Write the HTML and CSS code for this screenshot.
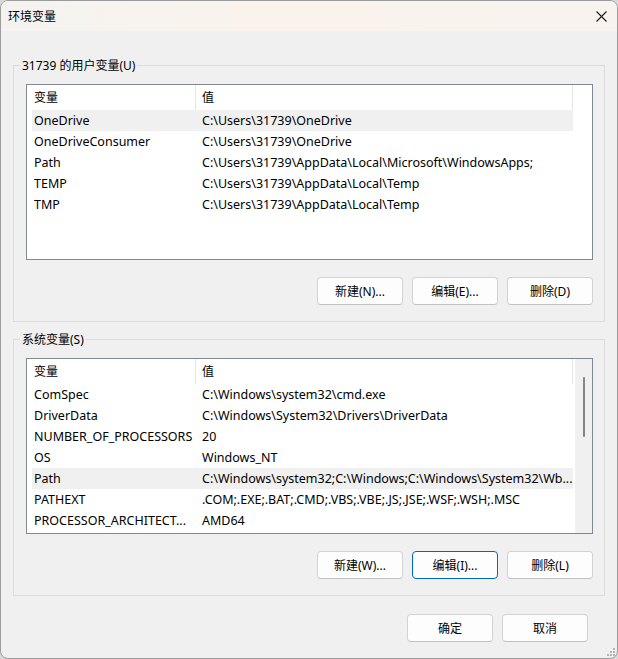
FILE: index.html
```html
<!DOCTYPE html>
<html lang="zh-CN">

<head>
    <meta charset="UTF-8">
    <meta name="viewport" content="width=device-width, initial-scale=1.0">
    <title>环境变量</title>
    <link rel="stylesheet" href="styles.css">
</head>

<body>
    <div class="window">
        <div class="titlebar">
            <span class="title">环境变量</span>
            <button class="btn-close" aria-label="关闭">
                <svg width="11" height="11" viewBox="0 0 11 11">
                    <path d="M0.5 0.5L10.5 10.5M10.5 0.5L0.5 10.5" stroke="#1b1b1b" stroke-width="1.1" fill="none" />
                </svg>
            </button>
        </div>

        <div class="content">
            <div class="group">
                <div class="group-title">31739 的用户变量(U)</div>
                <div class="list">
                    <div class="list-body">
                        <div class="row head">
                            <div class="cell name">变量</div>
                            <div class="cell value">值</div>
                        </div>
                        <div class="row hot">
                            <div class="cell name">OneDrive</div>
                            <div class="cell value">C:\Users\31739\OneDrive</div>
                        </div>
                        <div class="row">
                            <div class="cell name">OneDriveConsumer</div>
                            <div class="cell value">C:\Users\31739\OneDrive</div>
                        </div>
                        <div class="row">
                            <div class="cell name">Path</div>
                            <div class="cell value">C:\Users\31739\AppData\Local\Microsoft\WindowsApps;</div>
                        </div>
                        <div class="row">
                            <div class="cell name">TEMP</div>
                            <div class="cell value">C:\Users\31739\AppData\Local\Temp</div>
                        </div>
                        <div class="row">
                            <div class="cell name">TMP</div>
                            <div class="cell value">C:\Users\31739\AppData\Local\Temp</div>
                        </div>
                    </div>
                    <div class="scroll-space"></div>
                </div>
                <div class="actions">
                    <button class="btn">新建(N)...</button>
                    <button class="btn">编辑(E)...</button>
                    <button class="btn">删除(D)</button>
                </div>
            </div>

            <div class="group group-system">
                <div class="group-title">系统变量(S)</div>
                <div class="list">
                    <div class="list-body">
                        <div class="row head">
                            <div class="cell name">变量</div>
                            <div class="cell value">值</div>
                        </div>
                        <div class="row">
                            <div class="cell name">ComSpec</div>
                            <div class="cell value">C:\Windows\system32\cmd.exe</div>
                        </div>
                        <div class="row">
                            <div class="cell name">DriverData</div>
                            <div class="cell value">C:\Windows\System32\Drivers\DriverData</div>
                        </div>
                        <div class="row">
                            <div class="cell name">NUMBER_OF_PROCESSORS</div>
                            <div class="cell value">20</div>
                        </div>
                        <div class="row">
                            <div class="cell name">OS</div>
                            <div class="cell value">Windows_NT</div>
                        </div>
                        <div class="row hot">
                            <div class="cell name">Path</div>
                            <div class="cell value">C:\Windows\system32;C:\Windows;C:\Windows\System32\Wb...</div>
                        </div>
                        <div class="row">
                            <div class="cell name">PATHEXT</div>
                            <div class="cell value">.COM;.EXE;.BAT;.CMD;.VBS;.VBE;.JS;.JSE;.WSF;.WSH;.MSC</div>
                        </div>
                        <div class="row">
                            <div class="cell name">PROCESSOR_ARCHITECT...</div>
                            <div class="cell value">AMD64</div>
                        </div>
                    </div>
                    <div class="scrollbar">
                        <div class="thumb"></div>
                    </div>
                </div>
                <div class="actions">
                    <button class="btn">新建(W)...</button>
                    <button class="btn btn-default">编辑(I)...</button>
                    <button class="btn">删除(L)</button>
                </div>
            </div>

            <div class="footer">
                <button class="btn">确定</button>
                <button class="btn">取消</button>
            </div>
        </div>

        <div class="grip">
            <svg width="10" height="10" viewBox="0 0 10 10">
                <rect x="7" y="1" width="2" height="2" fill="#b4b4b4" />
                <rect x="4" y="4" width="2" height="2" fill="#b4b4b4" />
                <rect x="7" y="4" width="2" height="2" fill="#b4b4b4" />
                <rect x="1" y="7" width="2" height="2" fill="#b4b4b4" />
                <rect x="4" y="7" width="2" height="2" fill="#b4b4b4" />
                <rect x="7" y="7" width="2" height="2" fill="#b4b4b4" />
            </svg>
        </div>
    </div>
</body>

</html>
```

FILE: styles.css
```css
body {
    font-family: "Noto Sans", "Noto Sans CJK SC", sans-serif;
    font-size: 12px;
    color: #000;
    margin: 0;
    padding: 0;
    background-color: #d9d9d9;
}

.window {
    position: relative;
    width: 618px;
    height: 659px;
    box-sizing: border-box;
    border: 1px solid #9c9c9c;
    border-radius: 8px;
    background-color: #f0f0f0;
    overflow: hidden;
}

.titlebar {
    display: flex;
    align-items: center;
    justify-content: space-between;
    height: 30px;
    padding: 0 0 0 7px;
    background: linear-gradient(90deg, #f4f3f1 0%, #faf3ec 45%, #f8f3ef 100%);
}

.title {
    font-size: 12px;
    line-height: 16px;
    padding-top: 1px;
}

.btn-close {
    display: flex;
    align-items: center;
    justify-content: center;
    width: 30px;
    height: 30px;
    margin-right: 1px;
    padding: 0;
    border: none;
    background: transparent;
}

.content {
    padding: 34px 12px 0 12px;
}

.group {
    border: 1px solid #dcdcdc;
    padding: 0 11px 16px 12px;
}

.group-system {
    margin-top: 17px;
}

.group-title {
    width: fit-content;
    height: 16px;
    line-height: 16px;
    margin: -8px 0 0 -6px;
    padding: 0 2px;
    background-color: #f0f0f0;
}

.list {
    display: flex;
    height: 176px;
    box-sizing: border-box;
    margin-top: 10px;
    border: 1px solid #828790;
    background-color: #fff;
}

.list-body {
    width: 541px;
    padding-left: 5px;
    overflow: hidden;
}

.row {
    display: flex;
    height: 21px;
    line-height: 21px;
    font-size: 12.5px;
    white-space: nowrap;
}

.row.head {
    height: 25px;
    line-height: 25px;
    font-size: 12px;
    border-right: 1px solid #e5e5e5;
    box-sizing: border-box;
}

.row.hot {
    background-color: #f0f0f0;
}

.cell {
    overflow: hidden;
}

.cell.name {
    width: 164px;
    padding-left: 2px;
    box-sizing: border-box;
    flex-shrink: 0;
}

.row.head .cell.name {
    border-right: 1px solid #e5e5e5;
}

.cell.value {
    flex: 1;
    padding-left: 6px;
}

.scroll-space {
    width: 19px;
}

.scrollbar {
    width: 17px;
    margin-left: 2px;
    background-color: #f0f0f0;
}

.thumb {
    width: 2px;
    height: 60px;
    margin: 18px auto 0;
    border-radius: 1px;
    background-color: #858585;
}

.actions {
    display: flex;
    justify-content: flex-end;
    gap: 9px;
    margin-top: 17px;
}

.btn {
    width: 86px;
    height: 28px;
    box-sizing: border-box;
    padding: 0;
    font-family: "Noto Sans", "Noto Sans CJK SC", sans-serif;
    font-size: 12px;
    color: #000;
    background-color: #fdfdfd;
    border: 1px solid #d2d2d2;
    border-bottom-color: #c2c2c2;
    border-radius: 4px;
    cursor: pointer;
}

.btn-default {
    border: 1px solid #0067c0;
}

.footer {
    display: flex;
    justify-content: flex-end;
    gap: 9px;
    margin-top: 18px;
    padding-right: 17px;
}

.grip {
    position: absolute;
    right: 1px;
    bottom: 1px;
    width: 10px;
    height: 10px;
}

.grip svg {
    display: block;
}
```
